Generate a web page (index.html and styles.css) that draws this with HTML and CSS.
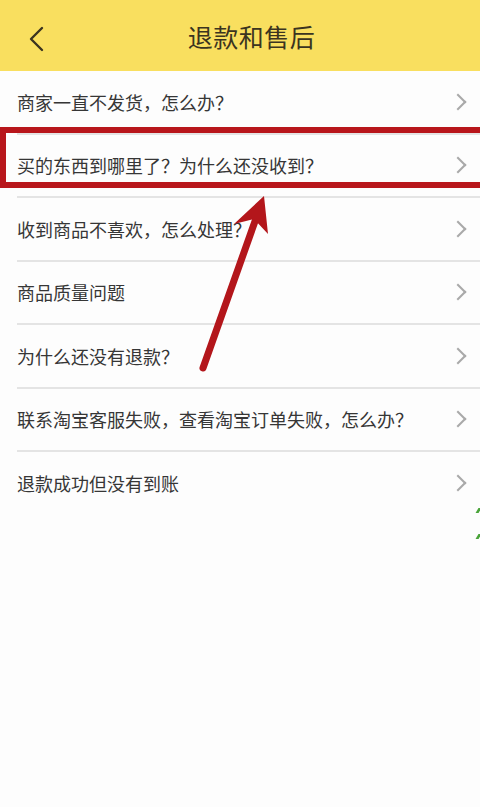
FILE: index.html
```html
<!DOCTYPE html>
<html lang="zh-CN">
<head>
  <meta charset="UTF-8" />
  <meta name="viewport" content="width=device-width, initial-scale=1.0"/>
  <title>退款和售后</title>
  <link rel="stylesheet" href="styles.css">
</head>
<body>

  <header class="topbar">
    <svg class="back" width="18" height="26" viewBox="0 0 18 26">
      <path d="M14 2 L3 13 L14 24" fill="none" stroke="#3b3420" stroke-width="2.4" stroke-linecap="round" stroke-linejoin="round"/>
    </svg>
    <h1>退款和售后</h1>
  </header>

  <ul class="list">
    <li>商家一直不发货，怎么办？</li>
    <li>买的东西到哪里了？为什么还没收到？</li>
    <li>收到商品不喜欢，怎么处理？</li>
    <li>商品质量问题</li>
    <li>为什么还没有退款？</li>
    <li>联系淘宝客服失败，查看淘宝订单失败，怎么办？</li>
    <li>退款成功但没有到账</li>
  </ul>

  <!-- annotation drawn over the screenshot -->
  <div class="highlight"></div>
  <svg class="pointer" width="480" height="400" viewBox="0 0 480 400">
    <line x1="203" y1="368" x2="259" y2="210" stroke="#b3161b" stroke-width="7" stroke-linecap="round"/>
    <polygon points="264,196 234,224 254,219 268,234" fill="#b3161b"/>
  </svg>
  <div class="tick tick-a"></div>
  <div class="tick tick-b"></div>

</body>
</html>
```

FILE: styles.css
```css
body {
  margin: 0;
  padding: 0;
  width: 480px;
  height: 807px;
  background: #fdfdfd;
  font-family: "Noto Sans CJK SC", "Noto Sans", sans-serif;
  color: #363636;
  position: relative;
  overflow: hidden;
}

.topbar {
  height: 71px;
  background: #f9df5f;
  display: flex;
  align-items: center;
  justify-content: center;
  position: relative;
}

.topbar h1 {
  margin: 0 0 0 23px;
  font-size: 25px;
  font-weight: 400;
  color: #3b3420;
  letter-spacing: 0.5px;
}

.back {
  position: absolute;
  left: 28px;
  top: 26px;
}

.list {
  list-style: none;
  margin: 0;
  padding: 0;
}

.list li {
  height: 61.5px;
  display: flex;
  align-items: center;
  margin-left: 17px;
  padding-right: 14px;
  font-size: 18px;
  border-bottom: 2px solid #e4e4e4;
  position: relative;
}

.list li:last-child {
  border-bottom: none;
}

.list li::after {
  content: "";
  position: absolute;
  right: 16px;
  top: 50%;
  width: 10px;
  height: 10px;
  margin-top: -6px;
  border-top: 2px solid #a9a9a9;
  border-right: 2px solid #a9a9a9;
  transform: rotate(45deg);
}

.highlight {
  position: absolute;
  left: 0;
  top: 127px;
  width: 492px;
  height: 61px;
  box-sizing: border-box;
  border: 6px solid #b8161b;
}

.pointer {
  position: absolute;
  left: 0;
  top: 0;
}

.tick {
  position: absolute;
  width: 3px;
  height: 5px;
  background: #4aa43a;
  right: 0;
  transform: skewX(-30deg);
}

.tick-a {
  top: 508px;
}

.tick-b {
  top: 534px;
}
```
